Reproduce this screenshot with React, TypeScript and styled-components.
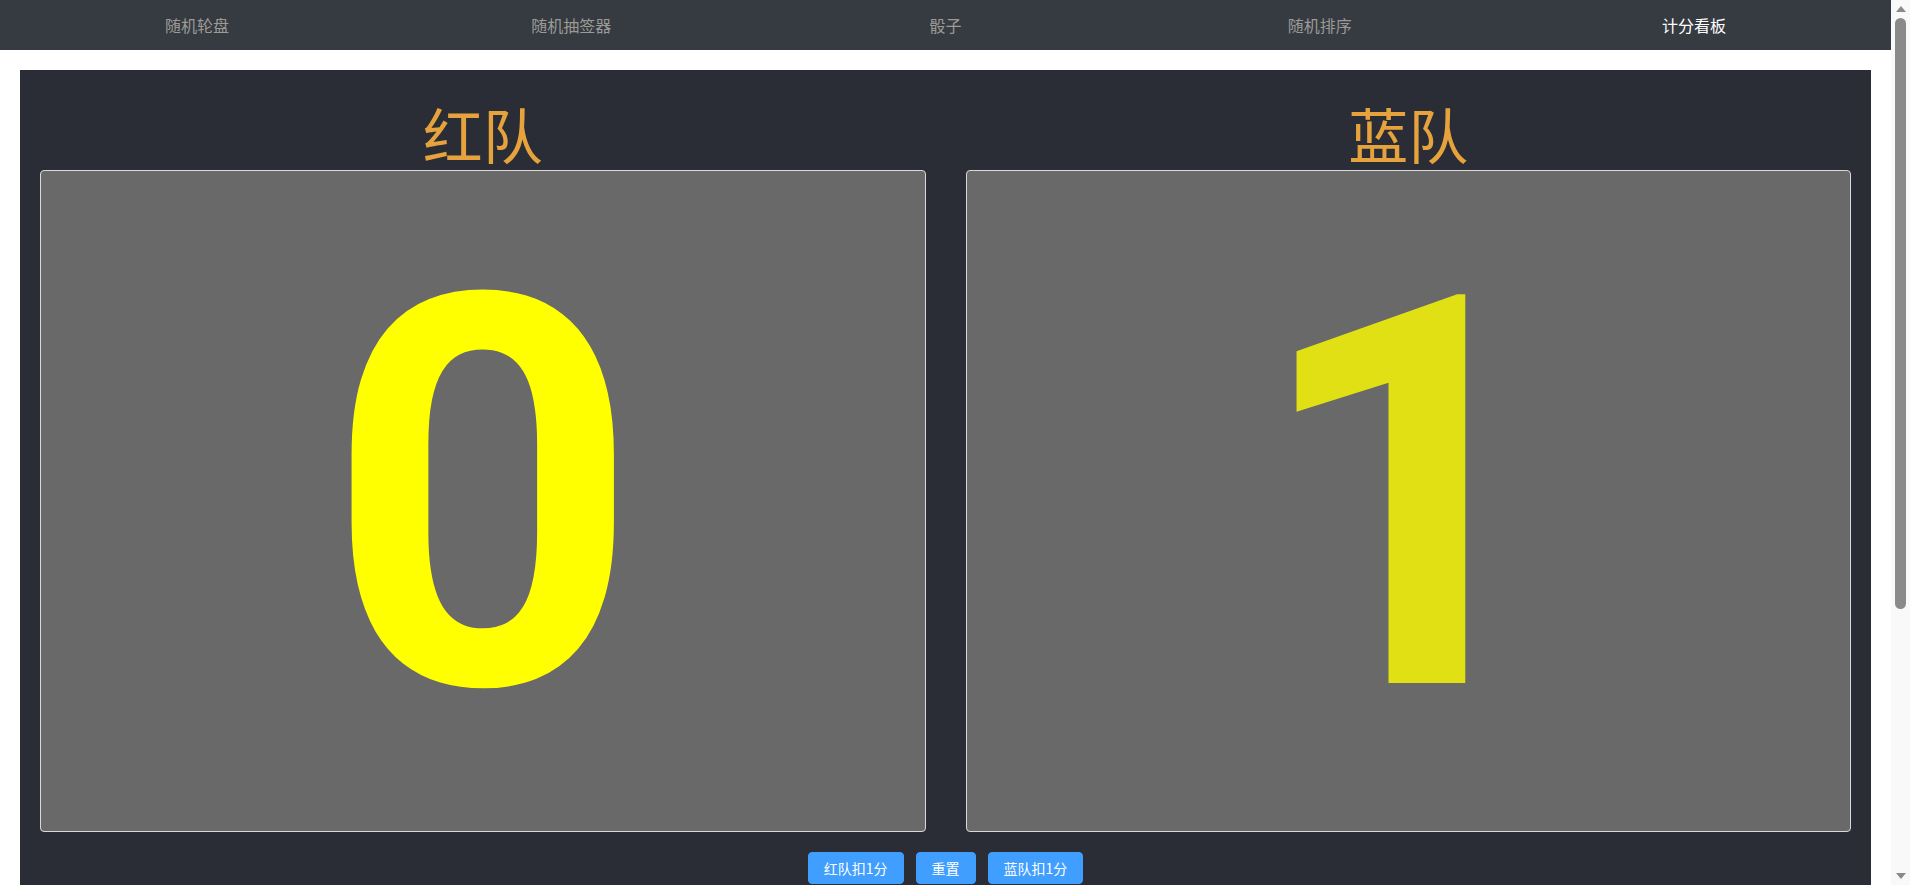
import React, { useState } from "react";
import styled, { createGlobalStyle } from "styled-components";

const GlobalStyle = createGlobalStyle`
  html, body {
    margin: 0;
    padding: 0;
    background: #ffffff;
    font-family: "Noto Sans CJK SC", "Noto Sans", sans-serif;
  }
  * { box-sizing: border-box; }
`;

const Page = styled.div`
  margin-right: 19px;
`;

const TopBar = styled.nav`
  height: 50px;
  background: #363b42;
  display: flex;
  padding: 0 10px;
`;

const NavItem = styled.div<{ $active?: boolean }>`
  flex: 1;
  text-align: center;
  line-height: 50px;
  font-size: 16px;
  color: ${(p) => (p.$active ? "#ffffff" : "#9b9a95")};
  cursor: pointer;
`;

const Panel = styled.main`
  margin: 20px;
  background: #2a2d35;
  padding: 20px;
  display: flex;
  flex-direction: column;
`;

const Columns = styled.div`
  display: grid;
  grid-template-columns: 1fr 1fr;
  column-gap: 40px;
`;

const Team = styled.section`
  display: flex;
  flex-direction: column;
`;

const TeamTitle = styled.h2`
  margin: 0;
  padding-top: 5px;
  height: 80px;
  line-height: 75px;
  font-size: 60px;
  font-weight: 400;
  text-align: center;
  color: #e6a23c;
  font-family: "Noto Sans CJK SC", sans-serif;
`;

const ScoreBox = styled.div`
  height: 662px;
  background: #696969;
  border: 1px solid #d9d9d9;
  border-radius: 4px;
  display: flex;
  align-items: center;
  justify-content: center;
  padding-bottom: 10px;
`;

const Score = styled.span<{ $color: string }>`
  font-family: Roboto, "Liberation Sans", Arial, sans-serif;
  font-weight: 700;
  font-size: 546px;
  line-height: normal;
  color: ${(p) => p.$color};
`;

const Actions = styled.div`
  margin-top: 20px;
  display: flex;
  justify-content: center;
  gap: 12px;
`;

const Button = styled.button`
  height: 32px;
  padding: 0 15px;
  border: 1px solid #409eff;
  border-radius: 4px;
  background: #409eff;
  color: #ffffff;
  font-size: 14px;
  font-family: "Noto Sans CJK SC", sans-serif;
  cursor: pointer;
`;

/* browser scrollbar look-alike, laid over the right edge of the viewport */
const ScrollTrack = styled.div`
  position: fixed;
  top: 0;
  right: 0;
  width: 19px;
  height: 100vh;
  background: #f9f9f9;
  display: flex;
  flex-direction: column;
  align-items: center;
  padding: 6px 0 6px 0;
`;

const Arrow = styled.div<{ $down?: boolean }>`
  width: 0;
  height: 0;
  border-left: 5px solid transparent;
  border-right: 5px solid transparent;
  ${(p) =>
    p.$down
      ? "border-top: 6px solid #8a8a8a; margin-top: auto;"
      : "border-bottom: 6px solid #8a8a8a;"}
`;

const Thumb = styled.div`
  margin-top: 6px;
  width: 11px;
  height: 591px;
  border-radius: 6px;
  background: #8a8a8a;
`;

const tabs = ["随机轮盘", "随机抽签器", "骰子", "随机排序", "计分看板"];

export default function App() {
  const [red, setRed] = useState(0);
  const [blue, setBlue] = useState(1);
  return (
    <>
      <GlobalStyle />
      <Page>
        <TopBar>
          {tabs.map((t, i) => (
            <NavItem key={t} $active={i === 4}>
              {t}
            </NavItem>
          ))}
        </TopBar>
        <Panel>
          <Columns>
            <Team>
              <TeamTitle>红队</TeamTitle>
              <ScoreBox onClick={() => setRed(red + 1)}>
                <Score $color="#ffff00">{red}</Score>
              </ScoreBox>
            </Team>
            <Team>
              <TeamTitle>蓝队</TeamTitle>
              <ScoreBox onClick={() => setBlue(blue + 1)}>
                <Score $color="#e0e014">{blue}</Score>
              </ScoreBox>
            </Team>
          </Columns>
          <Actions>
            <Button onClick={() => setRed(red - 1)}>红队扣1分</Button>
            <Button
              onClick={() => {
                setRed(0);
                setBlue(0);
              }}
            >
              重置
            </Button>
            <Button onClick={() => setBlue(blue - 1)}>蓝队扣1分</Button>
          </Actions>
        </Panel>
      </Page>
      <ScrollTrack aria-hidden>
        <Arrow />
        <Thumb />
        <Arrow $down />
      </ScrollTrack>
    </>
  );
}
